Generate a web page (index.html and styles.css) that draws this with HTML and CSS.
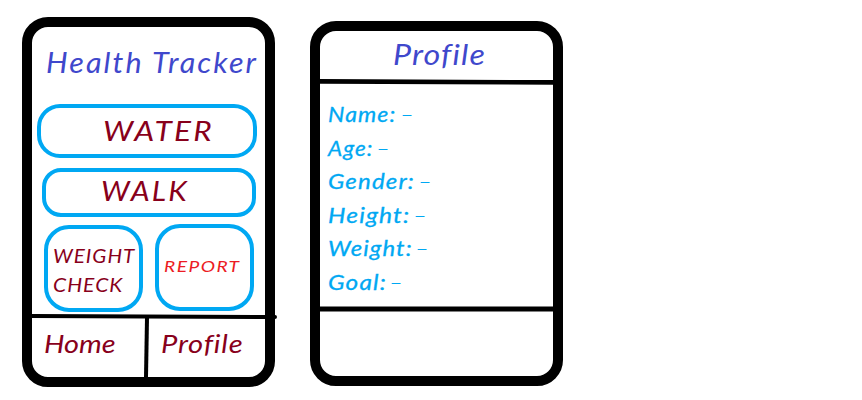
FILE: index.html
```html
<!DOCTYPE html>
<html lang="en">
<head>
<meta charset="utf-8">
<title>Health Tracker</title>
<link rel="stylesheet" href="styles.css">
</head>
<body>
<main class="board">
  <section class="phone home">
    <h1 class="title"><span>Health Tracker</span></h1>
    <div class="card water"><span>WATER</span></div>
    <div class="card walk"><span>WALK</span></div>
    <div class="pair">
      <div class="card weight"><span class="w1">WEIGHT</span><span class="w2">CHECK</span></div>
      <div class="card report"><span>REPORT</span></div>
    </div>
    <svg class="rule" width="245" height="6" viewBox="0 0 245 6"><path d="M0 3.9L243 5" stroke="#000" stroke-width="4" stroke-linecap="round"/></svg>
    <nav class="tabs">
      <div class="tab tab-home"><span>Home</span></div>
      <svg class="divider" width="5" height="59" viewBox="0 0 5 59"><path d="M3 0L2 59" stroke="#000" stroke-width="4"/></svg>
      <div class="tab tab-profile"><span>Profile</span></div>
    </nav>
  </section>
  <section class="phone profile">
    <h2 class="heading"><span>Profile</span></h2>
    <svg class="line" width="233" height="6" viewBox="0 0 233 6"><path d="M0 2.4L233 3.4" stroke="#000" stroke-width="4.6"/></svg>
    <div class="fields">
      <div class="field"><span class="label name">Name:</span><span class="dash">-</span></div>
      <div class="field"><span class="label age">Age:</span><span class="dash">-</span></div>
      <div class="field"><span class="label gender">Gender:</span><span class="dash">-</span></div>
      <div class="field"><span class="label height">Height:</span><span class="dash">-</span></div>
      <div class="field"><span class="label mass">Weight:</span><span class="dash">-</span></div>
      <div class="field"><span class="label goal">Goal:</span><span class="dash">-</span></div>
    </div>
    <svg class="line" width="233" height="6" viewBox="0 0 233 6"><path d="M0 3H233" stroke="#000" stroke-width="5"/></svg>
  </section>
</main>
</body>
</html>
```
FILE: styles.css
```css
* { box-sizing: border-box; }
body {
  margin: 0;
  background: #fff;
  font-family: Lato, "Liberation Sans", sans-serif;
  font-style: italic;
  color: #88001b;
}
svg { display: block; fill: none; overflow: visible; flex: none; }
span { display: inline-block; white-space: nowrap; transform-origin: left center; }
.board { display: flex; align-items: flex-start; gap: 35px; padding: 17px 0 0 22px; height: 400px; }
.phone { width: 253px; height: 370px; border: 10px solid #000; border-radius: 26px; display: flex; flex-direction: column; flex: none; }
.profile { height: 365px; margin-top: 4px; }
.title, .heading { margin: 0; font-weight: 400; color: #3f48cc; white-space: nowrap; flex: none; }
.title { height: 77px; padding-left: 14px; font-size: 28px; line-height: 71px; letter-spacing: 1.9px; }
.title span { transform: scaleX(1.09); }
.card { border: 4px solid #00a8f3; flex: none; }
.water { width: 220px; height: 54px; margin-left: 5px; border-radius: 23px; padding-left: 62px; font-size: 27px; line-height: 46px; letter-spacing: 2px; }
.water span { transform: scaleX(1.17); }
.walk { width: 214px; height: 49px; margin: 10px 0 0 10px; border-radius: 19px; padding-left: 55px; font-size: 27px; line-height: 37px; letter-spacing: 2px; }
.walk span { transform: scaleX(1.11); }
.pair { display: flex; gap: 12px; padding: 7px 0 0 12px; flex: none; }
.weight { width: 99px; height: 87px; margin-top: 1px; border-radius: 25px; padding: 12px 0 0 5px; display: flex; flex-direction: column; font-size: 20px; line-height: 29px; letter-spacing: 1px; }
.w1 { transform: scaleX(1.03); }
.w2 { transform: scaleX(1.05); }
.report { width: 99px; height: 87px; border-radius: 25px; padding-left: 5px; color: #ec1c24; font-size: 16px; line-height: 76px; letter-spacing: 1.2px; }
.report span { transform: scaleX(1.2); }
.tabs { display: flex; height: 59px; }
.tab { font-size: 26px; line-height: 51px; flex: none; }
.tab-home { width: 112px; padding-left: 12px; }
.tab-home span { transform: scaleX(1.11); }
.tab-profile { padding-left: 12px; }
.tab-profile span { transform: scaleX(1.12); letter-spacing: .7px; }
.heading { height: 48px; padding-left: 73px; font-size: 28px; line-height: 47px; letter-spacing: 1px; }
.heading span { transform: scaleX(1.15); }
.fields { height: 221px; padding: 12px 0 0 8px; color: #00a8f3; font-size: 21px; flex: none; }
.field { height: 33.6px; line-height: 34px; display: flex; }
.label { letter-spacing: 1px; -webkit-text-stroke: .3px #00a8f3; }
.name { width: 72px; transform: scaleX(1.1); }
.age { width: 48px; transform: scaleX(1.07); }
.gender { width: 90px; transform: scaleX(1.145); }
.height { width: 85px; transform: scaleX(1.17); }
.mass { width: 87px; transform: scaleX(1.135); }
.goal { width: 61px; transform: scaleX(1.16); }
.dash { font-style: normal; font-weight: 300; transform: scaleX(1.8); }
```
